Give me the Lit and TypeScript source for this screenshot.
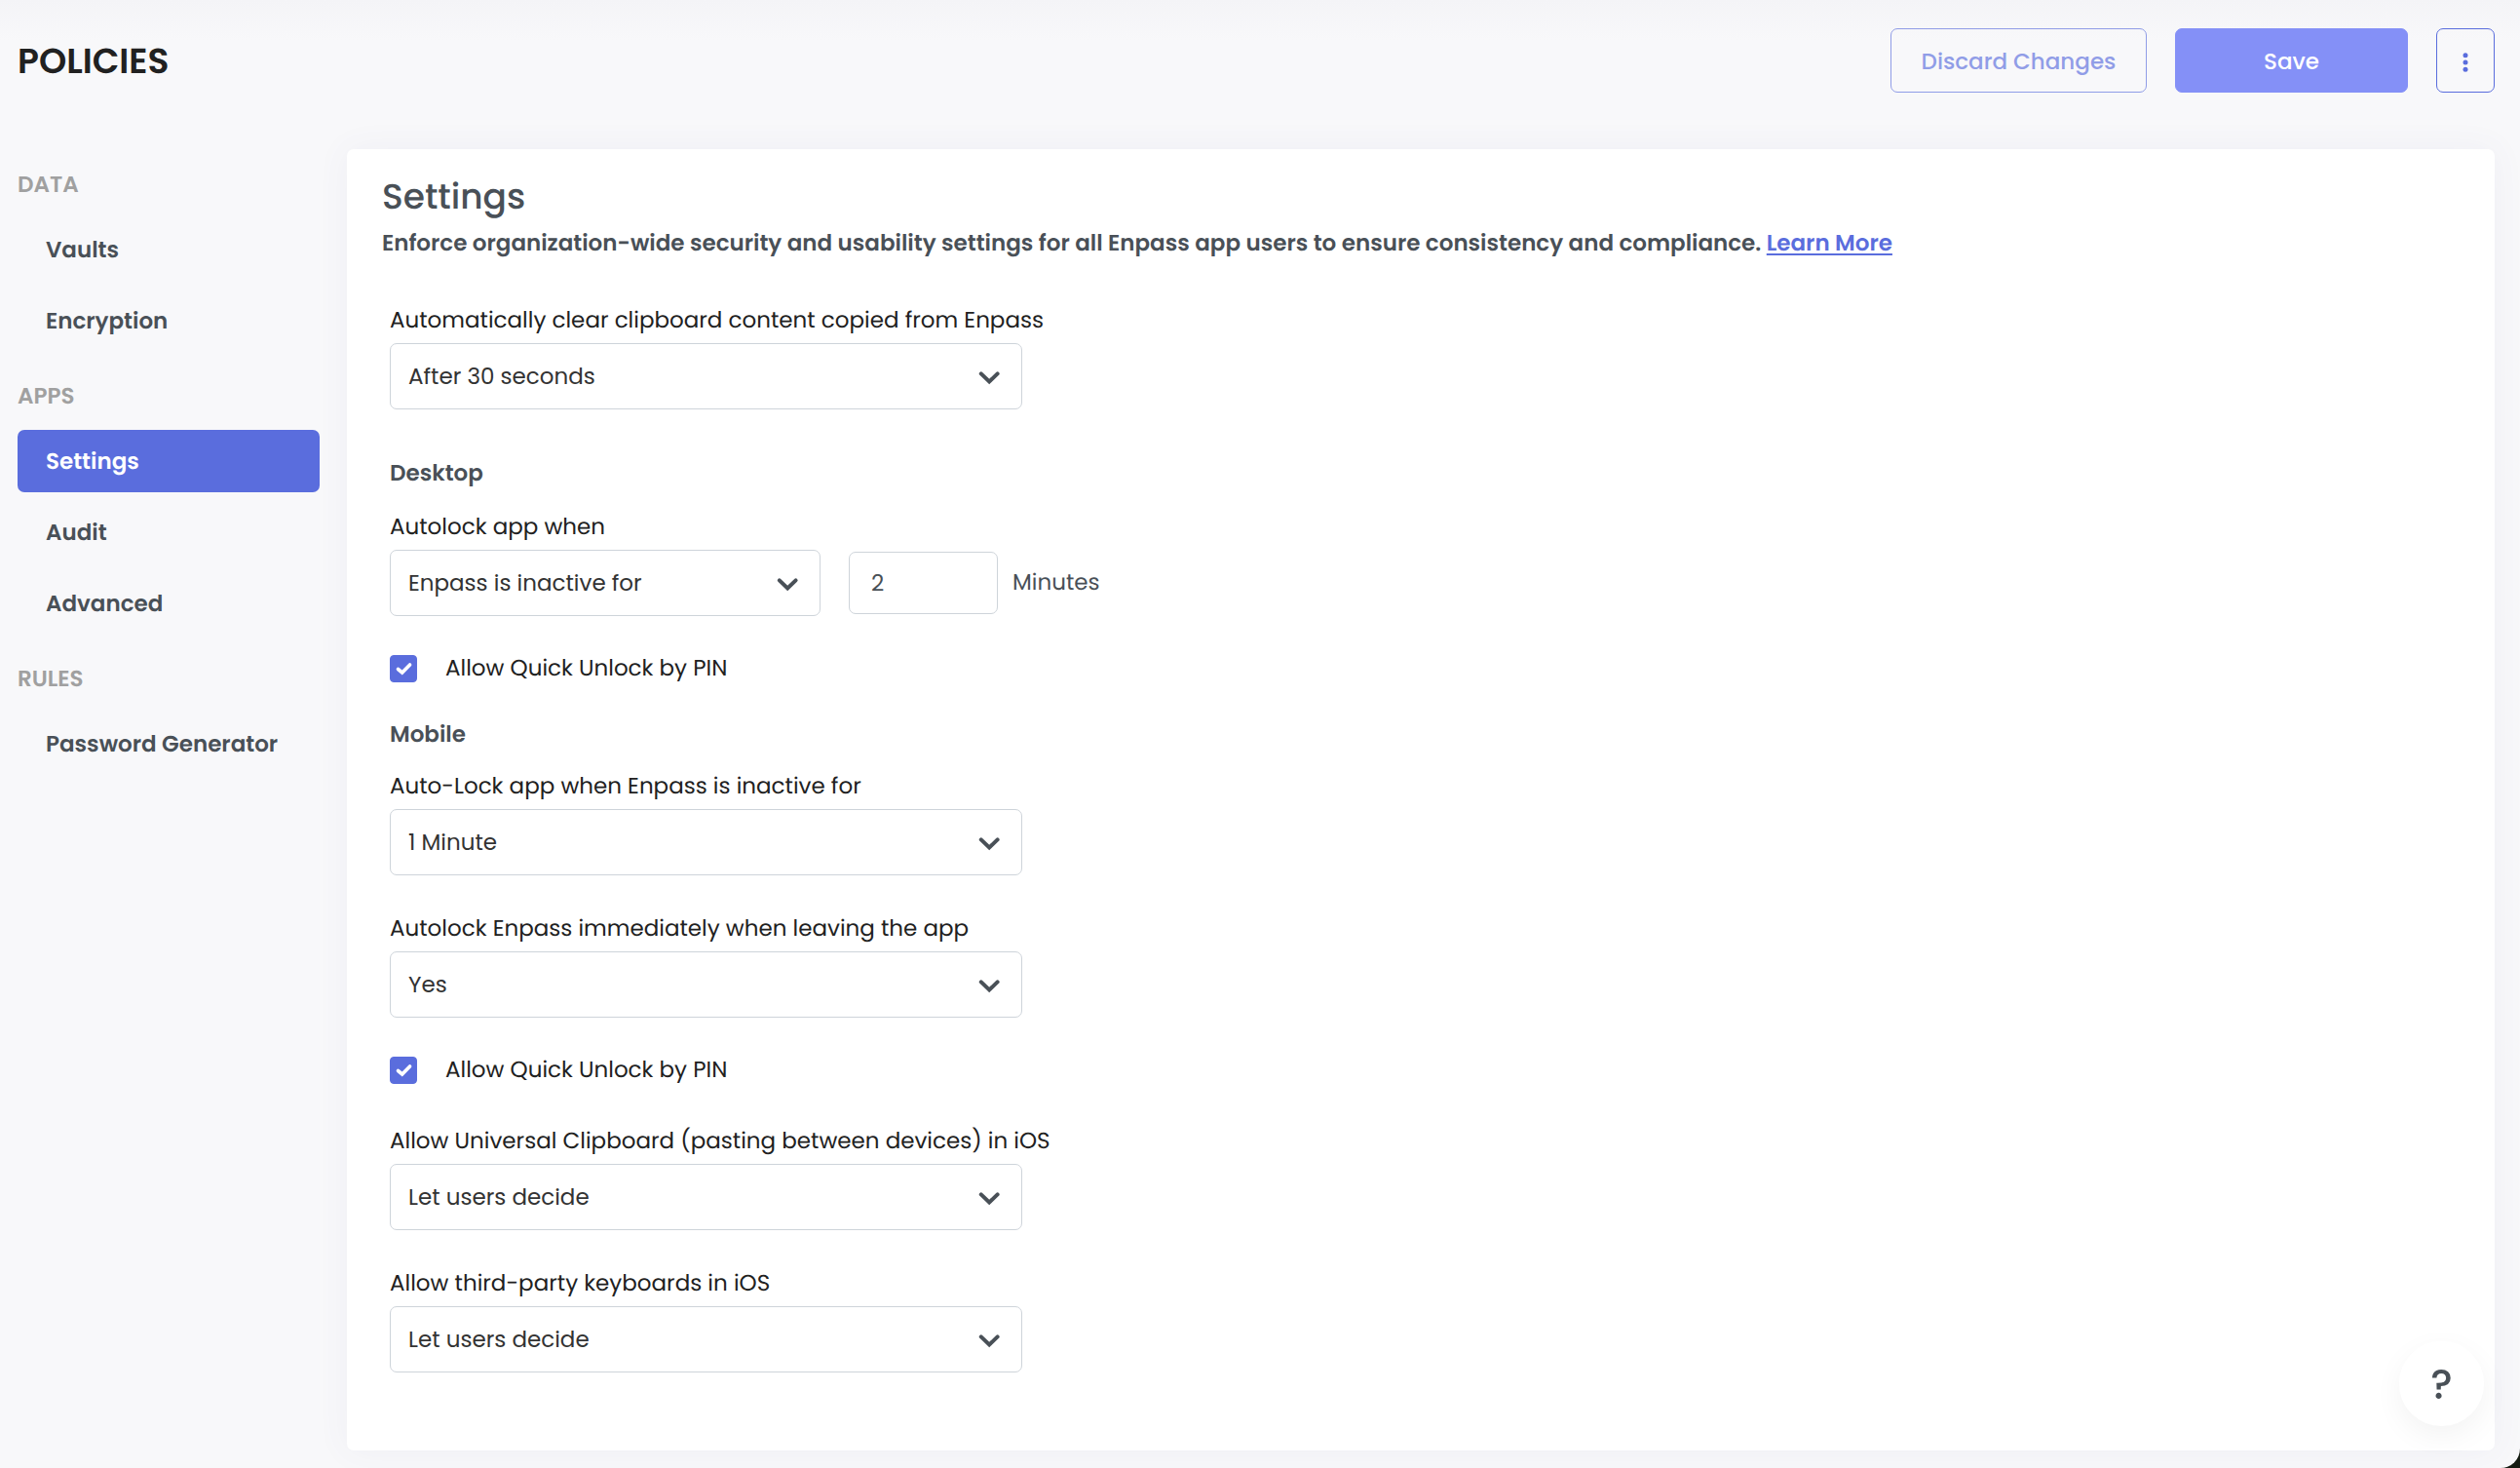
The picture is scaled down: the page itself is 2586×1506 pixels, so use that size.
import { LitElement, html, css, svg } from "lit";
import { customElement, property } from "lit/decorators.js";
import { classMap } from "lit/directives/class-map.js";

interface NavGroup {
  title: string;
  items: string[];
}

const NAV: NavGroup[] = [
  { title: "DATA", items: ["Vaults", "Encryption"] },
  { title: "APPS", items: ["Settings", "Audit", "Advanced"] },
  { title: "RULES", items: ["Password Generator"] },
];

@customElement("select-field")
class SelectField extends LitElement {
  @property() label = "";
  @property({ type: Array }) options: string[] = [];

  static styles = css`
    :host {
      display: block;
    }
    .label {
      display: block;
      margin-bottom: 4px;
      line-height: 38px;
      color: #212121;
      white-space: nowrap;
    }
    .box {
      display: grid;
      align-items: center;
    }
    .select {
      grid-area: 1 / 1;
      box-sizing: border-box;
      width: 100%;
      height: 68px;
      padding: 0 64px 0 18px;
      border: 1px solid #ced4da;
      border-radius: 7px;
      background: #fff;
      color: #333;
      font: inherit;
      appearance: none;
    }
    .chevron {
      grid-area: 1 / 1;
      justify-self: end;
      width: 24px;
      height: 24px;
      margin-right: 22px;
      pointer-events: none;
    }
  `;

  render() {
    return html`
      <label class="label" for="control">${this.label}</label>
      <div class="box">
        <select class="select" id="control">
          ${this.options.map((o) => html`<option>${o}</option>`)}
        </select>
        <svg class="chevron" viewBox="0 0 24 24" aria-hidden="true">
          <path
            d="M3.8 9.4 L12.2 17.4 L20.6 9.4"
            fill="none"
            stroke="#495057"
            stroke-width="4"
            stroke-linecap="round"
          />
        </svg>
      </div>
    `;
  }
}

@customElement("check-field")
class CheckField extends LitElement {
  @property() label = "";

  static styles = css`
    :host {
      display: block;
    }
    .row {
      display: flex;
      align-items: center;
      gap: 29px;
      line-height: 36px;
      color: #212121;
    }
    .mark {
      display: grid;
    }
    .check {
      grid-area: 1 / 1;
      width: 28px;
      height: 28px;
      margin: 0;
      border: 1px solid #5a6ddd;
      border-radius: 4px;
      background: #fff;
      appearance: none;
    }
    .check:checked {
      background: #5a6ddd;
    }
    .tick {
      grid-area: 1 / 1;
      width: 28px;
      height: 28px;
      pointer-events: none;
    }
  `;

  render() {
    return html`
      <label class="row">
        <span class="mark">
          <input class="check" type="checkbox" checked />
          <svg class="tick" viewBox="0 0 28 28" aria-hidden="true">
            <path
              d="M8.5 14.5 L12.7 18 L20.6 10"
              fill="none"
              stroke="#fff"
              stroke-width="3.6"
              stroke-linecap="round"
            />
          </svg>
        </span>
        <span>${this.label}</span>
      </label>
    `;
  }
}

@customElement("app-root")
class AppRoot extends LitElement {
  static styles = css`
    :host {
      display: block;
      background: #151c12;
      font-family: Poppins, Inter, "Open Sans", sans-serif;
      font-size: 23px;
      text-rendering: geometricPrecision;
      color: #495057;
    }
    .page {
      box-sizing: border-box;
      min-height: 100vh;
      padding: 29px 26px 17px 18px;
      border-bottom-right-radius: 20px;
      background: linear-gradient(#f4f4f7, #f8f8fa 42px);
    }
    .header {
      display: flex;
      align-items: center;
      gap: 29px;
      margin-bottom: 58px;
    }
    .title {
      flex: 1;
      margin: 0;
      padding-top: 2px;
      font-size: 36px;
      font-weight: 600;
      line-height: 64px;
      color: #212121;
    }
    .button {
      box-sizing: border-box;
      height: 66px;
      padding: 2px 28px 0;
      border: 1px solid #5a6ddd;
      border-radius: 7px;
      background: transparent;
      color: #5a6ddd;
      font: inherit;
      font-weight: 500;
    }
    .discard {
      min-width: 263px;
      opacity: 0.65;
    }
    .save {
      min-width: 239px;
      border-color: #8490f7;
      background: #8490f7;
      color: #fff;
    }
    .more {
      display: grid;
      place-items: center;
      width: 60px;
      padding: 4px 0 0;
    }
    .dots {
      width: 8px;
      height: 24px;
    }
    .body {
      display: grid;
      grid-template-columns: 310px minmax(0, 1fr);
      gap: 28px;
    }
    .nav {
      display: flex;
      flex-direction: column;
      gap: 27px;
      padding-top: 18px;
    }
    .group {
      display: flex;
      flex-direction: column;
      gap: 9px;
    }
    .group-title {
      margin: 0 0 6px;
      font-size: 23px;
      font-weight: 600;
      line-height: 38px;
      color: #a0a0a0;
    }
    .link {
      padding: 2px 29px 0;
      border-radius: 7px;
      font-weight: 600;
      line-height: 62px;
      color: #495057;
      text-decoration: none;
    }
    .active {
      background: #5a6ddd;
      color: #fff;
    }
    .panel {
      padding: 22px 36px 80px;
      border-radius: 7px;
      background: #fff;
      box-shadow: 0 0 34px rgba(90, 80, 160, 0.06);
    }
    .panel-title {
      margin: 0;
      font-size: 36px;
      font-weight: 500;
      line-height: 54px;
    }
    .intro {
      margin: 0;
      font-weight: 600;
      line-height: 43px;
    }
    .learn {
      color: #5a6ddd;
      text-underline-offset: 3px;
      text-decoration-thickness: 2px;
    }
    .form {
      display: flex;
      flex-direction: column;
      gap: 36px;
      margin: 38px 0 0 8px;
    }
    .section {
      display: flex;
      flex-direction: column;
      gap: 36px;
    }
    .section-title {
      margin: 12px 0 -18px;
      font-size: 23px;
      font-weight: 600;
      line-height: 36px;
    }
    .mobile {
      margin: -4px 0 -20px;
    }
    .wide {
      width: 649px;
    }
    .inline {
      display: flex;
      align-items: flex-end;
      gap: 29px;
    }
    .autolock {
      width: 442px;
    }
    .amount {
      display: flex;
      align-items: center;
      gap: 15px;
      height: 68px;
    }
    .number {
      box-sizing: border-box;
      width: 153px;
      height: 64px;
      padding: 0 22px;
      border: 1px solid #ced4da;
      border-radius: 7px;
      background: #fff;
      color: #495057;
      font: inherit;
    }
    .help {
      position: fixed;
      right: 37px;
      bottom: 43px;
      width: 87px;
      height: 87px;
      padding: 2px 0 0;
      border: 0;
      border-radius: 50%;
      background: #fff;
      box-shadow: 0 10px 30px rgba(0, 0, 0, 0.05);
      color: #495057;
      font: inherit;
      font-size: 42px;
      font-weight: 500;
    }
  `;

  private renderNav() {
    return NAV.map(
      (group) => html`
        <div class="group">
          <h2 class="group-title">${group.title}</h2>
          ${group.items.map(
            (item) => html`<a
              class=${classMap({ link: true, active: item === "Settings" })}
              href="#"
              >${item}</a
            >`
          )}
        </div>
      `
    );
  }

  render() {
    return html`
      <div class="page">
        <header class="header">
          <h1 class="title">POLICIES</h1>
          <button class="button discard">Discard Changes</button>
          <button class="button save">Save</button>
          <button class="button more" aria-label="More options">
            <svg class="dots" viewBox="0 0 8 24" fill="#5a6ddd" aria-hidden="true">
              ${[4.8, 12, 19.2].map((y) => svg`<circle cx="4" cy=${y} r="2.5" />`)}
            </svg>
          </button>
        </header>
        <div class="body">
          <nav class="nav">${this.renderNav()}</nav>
          <main class="panel">
            <h2 class="panel-title">Settings</h2>
            <p class="intro">
              Enforce organization-wide security and usability settings for all Enpass app users to
              ensure consistency and compliance.
              <a class="learn" href="#">Learn More</a>
            </p>
            <form class="form">
              <select-field
                class="wide"
                .label=${"Automatically clear clipboard content copied from Enpass"}
                .options=${["After 30 seconds"]}
              ></select-field>
              <section class="section">
                <h3 class="section-title">Desktop</h3>
                <div class="inline">
                  <select-field
                    class="autolock"
                    .label=${"Autolock app when"}
                    .options=${["Enpass is inactive for"]}
                  ></select-field>
                  <div class="amount">
                    <input class="number" id="minutes" type="text" inputmode="numeric" value="2" />
                    <label for="minutes">Minutes</label>
                  </div>
                </div>
                <check-field .label=${"Allow Quick Unlock by PIN"}></check-field>
              </section>
              <section class="section">
                <h3 class="section-title mobile">Mobile</h3>
                <select-field
                  class="wide"
                  .label=${"Auto-Lock app when Enpass is inactive for"}
                  .options=${["1 Minute"]}
                ></select-field>
                <select-field
                  class="wide"
                  .label=${"Autolock Enpass immediately when leaving the app"}
                  .options=${["Yes"]}
                ></select-field>
                <check-field .label=${"Allow Quick Unlock by PIN"}></check-field>
                <select-field
                  class="wide"
                  .label=${"Allow Universal Clipboard (pasting between devices) in iOS"}
                  .options=${["Let users decide"]}
                ></select-field>
                <select-field
                  class="wide"
                  .label=${"Allow third-party keyboards in iOS"}
                  .options=${["Let users decide"]}
                ></select-field>
              </section>
            </form>
          </main>
        </div>
        <button class="help" aria-label="Help">?</button>
      </div>
    `;
  }
}
